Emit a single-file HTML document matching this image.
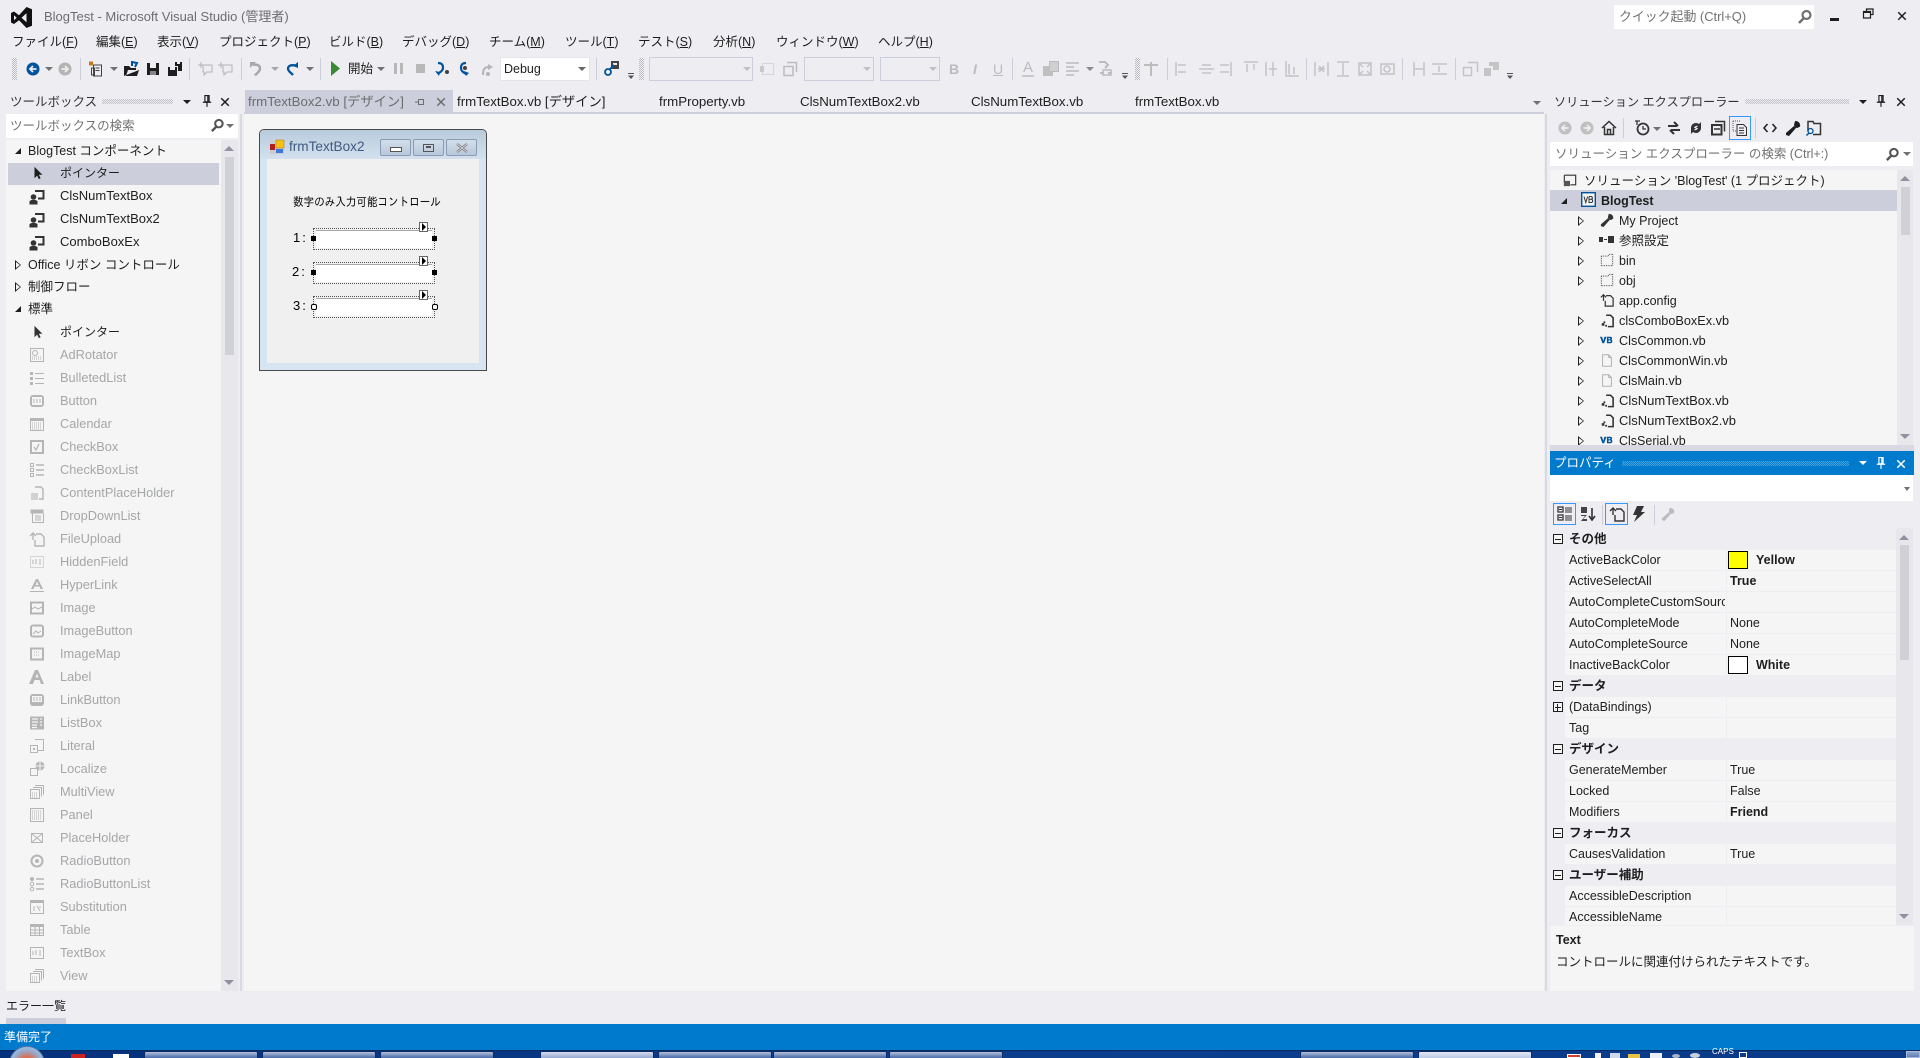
<!DOCTYPE html>
<html lang="ja"><head><meta charset="utf-8"><title>BlogTest - Microsoft Visual Studio</title>
<style>
html,body{margin:0;padding:0;width:1920px;height:1058px;overflow:hidden;background:#eeeef2}
body{position:relative;font:12.5px/20px "Liberation Sans","Noto Sans CJK JP",sans-serif;color:#1e1e1e}
.t{position:absolute;white-space:nowrap;line-height:20px}
.r{position:absolute}
svg{position:absolute;overflow:visible}
.d{color:#a5a6a8;font-size:12.8px}
.l{font-size:13px}
.tab{font-size:13.3px}
.b{font-weight:bold}
.gh{position:absolute;height:5px;background:repeating-conic-gradient(#c2c2c9 0 25%,transparent 0 50%) 0 0/2px 2px}
.gv{position:absolute;width:5px;height:22px;top:58px;background:repeating-conic-gradient(#bdbdc4 0 25%,transparent 0 50%) 0 0/2px 2px}
.sep{position:absolute;width:1px;background:#cccedb}
.tri{position:absolute;width:0;height:0;border-left:4px solid transparent;border-right:4px solid transparent;border-top:4px solid #717171}
.up{position:absolute;width:0;height:0;border-left:5px solid transparent;border-right:5px solid transparent;border-bottom:5px solid #8f90a0}
.dn{position:absolute;width:0;height:0;border-left:5px solid transparent;border-right:5px solid transparent;border-top:5px solid #8f90a0}
.ex{position:absolute;margin:-1px 0 0 -1px;width:0;height:0;border-top:5px solid transparent;border-bottom:5px solid transparent;border-left:6px solid #1e1e1e}
.ex:after{content:"";position:absolute;left:-5px;top:-3px;width:0;height:0;border-top:3px solid transparent;border-bottom:3px solid transparent;border-left:4px solid #f5f5f5}
.exo:after{border-left-color:#eeeef2}
.ec{position:absolute;width:0;height:0;border-left:6px solid transparent;border-bottom:6px solid #1e1e1e}
.row{position:absolute;height:20px;background:#f5f5f5}
.bx{position:absolute;width:8px;height:8px;border:1px solid #1e1e1e;background:#f5f5f5}
.bx:before{content:"";position:absolute;left:1px;right:1px;top:3.5px;height:1px;background:#1e1e1e}
.sw{position:absolute;width:18px;height:16px;border:1px solid #000}
.tb{position:absolute;top:1051px;height:8px;width:114px;background:linear-gradient(#b5c2dc,#5a78b0 70%,#3d5f9e);border:1px solid #0b2c66;border-bottom:0;box-sizing:border-box;border-radius:2px 2px 0 0}
.fb{position:absolute;top:139px;width:29px;height:15px;border:1px solid #8a9bb3;border-radius:2px;background:linear-gradient(#d3deea,#b8c8da)}
.dot{position:absolute;left:313px;width:120px;height:20px;border:1px dotted #555;box-sizing:content-box}
.tx{position:absolute;left:316px;width:116px;height:18px;background:#fff;border-top:1px solid #a8a8a8;box-sizing:border-box}
.hb{position:absolute;width:5px;height:5px;background:#000}
.hw{position:absolute;width:4px;height:4px;background:#fff;border:1px solid #000;border-radius:2px}
.st{position:absolute;left:419px;width:7px;height:8px;background:#fff;border:1px solid #666}
.st:after{content:"";position:absolute;left:2px;top:0;border-top:4px solid transparent;border-bottom:4px solid transparent;border-left:4px solid #000}
</style></head><body>
<svg width="0" height="0" style="position:absolute">
<defs>
<symbol id="back" viewBox="0 0 16 16"><circle cx="8" cy="8" r="6.5" fill="currentColor"/><path d="M11.5 8H6M8 5L5 8l3 3" fill="none" stroke="#eeeef2" stroke-width="1.8"/></symbol>
<symbol id="fwd" viewBox="0 0 16 16"><circle cx="8" cy="8" r="6.5" fill="currentColor"/><path d="M4.5 8H10M8 5l3 3-3 3" fill="none" stroke="#eeeef2" stroke-width="1.8"/></symbol>
<symbol id="a" viewBox="0 0 16 16"><rect x="1.5" y="1.5" width="13" height="13" fill="none" stroke="currentColor"/><circle cx="6" cy="6" r="2.5" fill="none" stroke="currentColor"/><path d="M3 12h10M3 10h10" stroke="currentColor" stroke-dasharray="1 1"/></symbol>
<symbol id="bl" viewBox="0 0 16 16"><path d="M1 2h3v3H1zM1 7h3v3H1zM1 12h3v3H1z" fill="currentColor"/><path d="M6 3.5h9M6 8.5h9M6 13.5h9" stroke="currentColor"/></symbol>
<symbol id="btn" viewBox="0 0 16 16"><rect x="1" y="2" width="14" height="12" rx="3" fill="currentColor"/><rect x="3" y="4" width="10" height="8" fill="#f5f5f5"/><path d="M5 6v4M8 6v4M11 6v4" stroke="currentColor"/></symbol>
<symbol id="cal" viewBox="0 0 16 16"><rect x="1.5" y="2.5" width="13" height="12" fill="none" stroke="currentColor"/><path d="M1 2h14v3H1z" fill="currentColor"/><path d="M3 7h10M3 9h10M3 11h10M3 13h10" stroke="currentColor" stroke-dasharray="1 1"/></symbol>
<symbol id="chk" viewBox="0 0 16 16"><rect x="1" y="1" width="14" height="14" fill="currentColor"/><rect x="3" y="3" width="10" height="10" fill="#f5f5f5"/><path d="M5 8l2 3 3-6" fill="none" stroke="currentColor" stroke-width="1.3"/></symbol>
<symbol id="cl" viewBox="0 0 16 16"><path d="M1.5 1.5h3v3h-3zM1.5 6.5h3v3h-3zM1.5 11.500h3v3h-3z" fill="none" stroke="currentColor"/><path d="M7 3h8M7 8h8M7 13h8" stroke="currentColor" stroke-width="1.6"/></symbol>
<symbol id="cph" viewBox="0 0 16 16"><path d="M6 2h6l2 2v10H10" fill="none" stroke="currentColor" stroke-width="1.4"/><rect x="2" y="8" width="7" height="7" fill="currentColor" opacity=".55"/></symbol>
<symbol id="ddl" viewBox="0 0 16 16"><rect x="1.500" y="1.500" width="13" height="4" fill="currentColor"/><path d="M3.500 5.500v9h11v-9" fill="none" stroke="currentColor"/><path d="M6 8h6M6 10h6M6 12h6" stroke="currentColor"/></symbol>
<symbol id="fu" viewBox="0 0 16 16"><path d="M7 3h5l3 3v9H6v-6" fill="none" stroke="currentColor" stroke-width="1.4"/><path d="M4 9V3M1 5l3-3 3 3" fill="none" stroke="currentColor" stroke-width="1.4"/></symbol>
<symbol id="hf" viewBox="0 0 16 16"><rect x="1.500" y="2.500" width="13" height="11" fill="none" stroke="currentColor" stroke-dasharray="1 1"/><path d="M4 6v4M7 5v5M11 5v6" stroke="currentColor"/></symbol>
<symbol id="hl" viewBox="0 0 16 16"><path d="M2 12L7 2h2l5 10h-2.500l-1-2.500h-5L4.500 12zM6.500 8h3L8 4.500z" fill="currentColor"/><path d="M1 14.500h14" stroke="currentColor"/></symbol>
<symbol id="img" viewBox="0 0 16 16"><rect x="1" y="1.500" width="14" height="13" fill="currentColor"/><rect x="3" y="3.500" width="10" height="9" fill="#f5f5f5"/><path d="M3 9l3-2 3 2 4-2" fill="none" stroke="currentColor"/></symbol>
<symbol id="ib" viewBox="0 0 16 16"><rect x="1" y="1.500" width="14" height="13" rx="3" fill="currentColor"/><rect x="3" y="3.500" width="10" height="9" fill="#f5f5f5"/><path d="M4 11l3-3 2 2 3-2" fill="none" stroke="currentColor"/></symbol>
<symbol id="im" viewBox="0 0 16 16"><rect x="1" y="1.500" width="14" height="13" fill="currentColor"/><rect x="3" y="3.500" width="10" height="9" fill="#f5f5f5"/><path d="M5 6h6M5 9h6" stroke="currentColor" stroke-dasharray="1 1"/></symbol>
<symbol id="lb" viewBox="0 0 16 16"><path d="M0 15L6 1h3l6 14h-3l-1.500-4h-5L4 15zM6.500 8.500h3L8 4.500z" fill="currentColor"/></symbol>
<symbol id="lk" viewBox="0 0 16 16"><rect x="1" y="2" width="14" height="12" rx="3" fill="currentColor"/><rect x="3" y="4" width="10" height="6" fill="#f5f5f5"/><path d="M5 5v4M8 5v4M11 5v4" stroke="currentColor"/></symbol>
<symbol id="lst" viewBox="0 0 16 16"><rect x="1" y="1.500" width="14" height="13" fill="currentColor"/><path d="M3 4h6M3 7h6M3 10h5M3 12.500h5M11 4h2M11 7h2M11 10h2" stroke="#f5f5f5" stroke-width="1.300"/></symbol>
<symbol id="lit" viewBox="0 0 16 16"><path d="M6 1.500h8.500v11H9" fill="none" stroke="currentColor"/><rect x="1.500" y="7.500" width="7" height="7" fill="#f5f5f5" stroke="currentColor"/><rect x="4" y="10" width="2" height="2" fill="currentColor"/></symbol>
<symbol id="loc" viewBox="0 0 16 16"><circle cx="11" cy="5" r="4.500" fill="currentColor"/><path d="M6.500 5h9M11 .5v9" stroke="#f5f5f5"/><rect x="1.500" y="7.500" width="7" height="7" fill="#f5f5f5" stroke="currentColor"/></symbol>
<symbol id="mv" viewBox="0 0 16 16"><path d="M6 1.500h8.500v9M4 3.500h8.500v9" fill="none" stroke="currentColor"/><rect x="1.500" y="5.500" width="9" height="9" fill="#f5f5f5" stroke="currentColor"/><path d="M3 9h6M3 11h6M3 13h6" stroke="currentColor" stroke-dasharray="1 1"/></symbol>
<symbol id="pn" viewBox="0 0 16 16"><rect x="1.500" y="1.500" width="13" height="13" fill="none" stroke="currentColor"/><path d="M3 4h10M3 6h10M3 8h10M3 10h10M3 12h10" stroke="currentColor" stroke-dasharray="1 1"/></symbol>
<symbol id="ph" viewBox="0 0 16 16"><rect x="2.500" y="3.500" width="11" height="9" fill="none" stroke="currentColor"/><path d="M2.500 3.500l11 9M13.500 3.500l-11 9" stroke="currentColor"/></symbol>
<symbol id="rb" viewBox="0 0 16 16"><circle cx="8" cy="8" r="5.500" fill="none" stroke="currentColor" stroke-width="2"/><circle cx="8" cy="8" r="2" fill="currentColor"/></symbol>
<symbol id="rl" viewBox="0 0 16 16"><circle cx="3" cy="3" r="2" fill="currentColor"/><circle cx="3" cy="8" r="1.800" fill="none" stroke="currentColor"/><circle cx="3" cy="13" r="1.800" fill="none" stroke="currentColor"/><path d="M7 3h8M7 8h8M7 13h8" stroke="currentColor" stroke-width="1.600"/></symbol>
<symbol id="sb" viewBox="0 0 16 16"><rect x="1.500" y="1.500" width="13" height="13" fill="none" stroke="currentColor"/><path d="M1 1h14v3H1z" fill="currentColor"/><path d="M5 7v5M8 7l3 5M11 7v2" stroke="currentColor"/></symbol>
<symbol id="tbl" viewBox="0 0 16 16"><rect x="1.500" y="2.500" width="13" height="11" fill="none" stroke="currentColor"/><path d="M1 2h14v3H1z" fill="currentColor"/><path d="M1 8h14M1 11h14M6 5v8M10.500 5v8" stroke="currentColor"/></symbol>
<symbol id="tx" viewBox="0 0 16 16"><rect x="1.500" y="2.500" width="13" height="11" fill="none" stroke="currentColor"/><path d="M4 6v4M7 5v5M11 5v6" stroke="currentColor"/></symbol>
<symbol id="ptr" viewBox="0 0 16 16"><path d="M4 1v13l3-3 2 4 2-1-2-4h4z" fill="currentColor"/></symbol>
<symbol id="cmp" viewBox="0 0 16 16"><path d="M6 2h8.500v7.500H9" fill="none" stroke="currentColor" stroke-width="2"/><circle cx="4.500" cy="8" r="2.800" fill="currentColor"/><path d="M.5 15.500V12l2-1h4l2 1v3.500z" fill="currentColor"/></symbol>
<symbol id="newp" viewBox="0 0 16 16"><path d="M5.500 4.500h8v11h-8zM3.500 7.500h3v7h-3z" fill="none" stroke="currentColor"/><path d="M1 1h4v4H1z" fill="#c27d1a"/><path d="M7.500 7.500h4M7.500 10h4" stroke="currentColor"/></symbol>
<symbol id="open" viewBox="0 0 16 16"><path d="M1 15V5h5l2 2h5v2H5l-2 6h11l2-6" fill="#1e1e1e"/><path d="M9 5V1l5 1-2 4" fill="none" stroke="#00539c" stroke-width="2"/></symbol>
<symbol id="save" viewBox="0 0 16 16"><path d="M2 2h12v12H2z" fill="currentColor"/><path d="M5 2h6v5H5z" fill="#eeeef2"/><path d="M5 10h6v4H5z" fill="#eeeef2" opacity=".5"/></symbol>
<symbol id="saveall" viewBox="0 0 16 16"><path d="M1 6h9v9H1z" fill="currentColor"/><path d="M3 6h5v3H3z" fill="#eeeef2"/><path d="M8 1h7v9h-4V5H8z" fill="currentColor"/><path d="M10 1h3v2h-3z" fill="#eeeef2"/></symbol>
<symbol id="cm" viewBox="0 0 16 16"><path d="M5 4h9v7H9l-3 3v-3H5z" fill="none" stroke="currentColor"/><path d="M3 1v6M0 4h6" stroke="currentColor"/></symbol>
<symbol id="undo" viewBox="0 0 16 16"><path d="M2 1h6L2 7z" fill="currentColor"/><path d="M5 4c4-1 7 .5 7 3.500 0 3-3 4.500-5 7" fill="none" stroke="currentColor" stroke-width="2.500"/></symbol>
<symbol id="redo" viewBox="0 0 16 16"><path d="M14 7V1l-5 4z" fill="currentColor"/><path d="M11 4.500c-4-1-7 .5-7 3 0 3 3 4 5 6.500" fill="none" stroke="currentColor" stroke-width="2.300"/></symbol>
<symbol id="si" viewBox="0 0 16 16"><path d="M4 2c4 0 5 2 5 5 0 3-3 4-5 6" fill="none" stroke="#00539c" stroke-width="2.200"/><path d="M1 10l5 1-1 4z" fill="#00539c"/><circle cx="13" cy="11" r="2" fill="#424242"/></symbol>
<symbol id="so" viewBox="0 0 16 16"><path d="M10 2C6 2 5 4 5 7s2 4 5 6" fill="none" stroke="#00539c" stroke-width="2.200"/><path d="M8 10l5 2-3 3z" fill="#00539c"/><circle cx="9" cy="7" r="2" fill="#424242"/></symbol>
<symbol id="sou" viewBox="0 0 16 16"><path d="M4 14c0-5 1-8 6-8" fill="none" stroke="currentColor" stroke-width="2"/><path d="M9 3l5 3-5 3z" fill="currentColor"/><circle cx="9" cy="13" r="2" fill="currentColor"/></symbol>
<symbol id="wr" viewBox="0 0 16 16"><path d="M10 1a4.500 4.500 0 0 1 5 5.500L12.500 8 10 7.500 9 5zM1 13l8-7 2 2-7 8-3-1z" fill="currentColor"/></symbol>
<symbol id="tbo" viewBox="0 0 16 16"><path d="M7 1h8v8H7z" fill="#424242"/><path d="M9 3h4v2H9z" fill="#eeeef2"/><circle cx="4" cy="12" r="3" fill="none" stroke="#00539c" stroke-width="1.800"/><path d="M6 9l4-4" stroke="#00539c" stroke-width="1.800"/></symbol>
<symbol id="srch" viewBox="0 0 16 16"><circle cx="9.500" cy="6" r="4" fill="none" stroke="currentColor" stroke-width="2.200"/><path d="M7 9l-5 5" stroke="currentColor" stroke-width="2.600"/></symbol>
<symbol id="pin" viewBox="0 0 12 16"><path d="M3.500 1.500h5V9h-5zM1 9.500h10M6 10v5M7 2v7" fill="none" stroke="currentColor" stroke-width="1.400"/></symbol>
<symbol id="x" viewBox="0 0 12 12"><path d="M1.500 1.500l9 9M10.500 1.500l-9 9" stroke="currentColor" stroke-width="1.800"/></symbol>
<symbol id="tdoc" viewBox="0 0 16 16"><path d="M3 1.500h7l3 3v10H3z" fill="none" stroke="currentColor"/><path d="M10 1.500v3h3" fill="none" stroke="currentColor"/></symbol>
<symbol id="frm" viewBox="0 0 16 16"><path d="M7 2h5l3 3v10H9" fill="none" stroke="currentColor" stroke-width="1.800"/><path d="M2 11h3v3H2zM6 13h2v2H6zM4 9h2v2H4z" fill="currentColor"/></symbol>
<symbol id="vb" viewBox="0 0 16 16"><path d="M0 4h2.500l1.500 5 1.500-5H8l-3 8H3zM8.500 4H13c2 0 2.500 3 1 3.500 2 .5 1.500 4.500-1 4.500H8.500zM10.500 5.500v1.500h2v-1.500zM10.500 8.500v2h2.500v-2z" fill="#00539c"/></symbol>
<symbol id="dots" viewBox="0 0 16 16"><path d="M1.500 3.500h8l1-2h4v13h-13z" fill="none" stroke="#333" stroke-dasharray="1 1"/></symbol>
</defs>
</svg>

<!-- title bar -->
<svg style="left:11px;top:7px" width="21" height="21" viewBox="0 0 21 21"><path d="M0 6l3-1.500 5 3.700L15.500 0 21 2.300v16.400L15.500 21 8 13.300l-5 3.700L0 15.500zM3 8.300v5l2.700-2.500zM15.500 6.300l-5 4.500 5 4.500z" fill="#111" fill-rule="evenodd"/></svg>
<div class="t" style="left:44px;top:7px;color:#6d6d70;font-size:13px">BlogTest - Microsoft Visual Studio (管理者)</div>
<div class="r" style="left:1614px;top:5px;width:200px;height:24px;background:#fff"></div>
<div class="t" style="left:1619px;top:7px;color:#717171;font-size:12.9px">クイック起動 (Ctrl+Q)</div>
<svg style="left:1797px;top:9px;color:#717171" width="16" height="16"><use href="#srch"/></svg>
<div class="r" style="left:1830px;top:18px;width:9px;height:3px;background:#1e1e1e"></div>
<svg style="left:1863px;top:8px" width="11" height="11" viewBox="0 0 11 11"><path d="M3.500 3V1H10v5.500H8M.5 3.500H7.500V10H.5z" fill="none" stroke="#1e1e1e" stroke-width="1.200"/><path d="M.5 4h7" stroke="#1e1e1e" stroke-width="2"/></svg>
<svg style="left:1897px;top:11px;color:#1e1e1e" width="10" height="10"><use href="#x"/></svg>

<!-- menu -->
<div class="t" style="left:12px;top:32px">ファイル(<u>F</u>)</div>
<div class="t" style="left:96px;top:32px">編集(<u>E</u>)</div>
<div class="t" style="left:157px;top:32px">表示(<u>V</u>)</div>
<div class="t" style="left:219px;top:32px">プロジェクト(<u>P</u>)</div>
<div class="t" style="left:329px;top:32px">ビルド(<u>B</u>)</div>
<div class="t" style="left:402px;top:32px">デバッグ(<u>D</u>)</div>
<div class="t" style="left:489px;top:32px">チーム(<u>M</u>)</div>
<div class="t" style="left:565px;top:32px">ツール(<u>T</u>)</div>
<div class="t" style="left:638px;top:32px">テスト(<u>S</u>)</div>
<div class="t" style="left:713px;top:32px">分析(<u>N</u>)</div>
<div class="t" style="left:776px;top:32px">ウィンドウ(<u>W</u>)</div>
<div class="t" style="left:878px;top:32px">ヘルプ(<u>H</u>)</div>

<!-- toolbar -->
<div class="gv" style="left:12px"></div>
<svg style="left:25px;top:61px;color:#00539c" width="16" height="16"><use href="#back"/></svg>
<div class="tri" style="left:45px;top:67px"></div>
<svg style="left:57px;top:61px;color:#b4b4b4" width="16" height="16"><use href="#fwd"/></svg>
<div class="sep" style="left:80px;top:58px;height:22px"></div>
<svg style="left:88px;top:60px;color:#424242" width="16" height="17"><use href="#newp"/></svg>
<div class="tri" style="left:110px;top:67px"></div>
<svg style="left:123px;top:61px" width="16" height="16"><use href="#open"/></svg>
<svg style="left:145px;top:61px;color:#1e1e1e" width="16" height="16"><use href="#save"/></svg>
<svg style="left:167px;top:61px;color:#1e1e1e" width="16" height="16"><use href="#saveall"/></svg>
<div class="sep" style="left:189px;top:58px;height:22px"></div>
<svg style="left:198px;top:61px;color:#b4b4b4" width="16" height="16"><use href="#cm"/></svg>
<svg style="left:218px;top:61px;color:#b4b4b4" width="16" height="16"><use href="#cm"/></svg>
<div class="sep" style="left:241px;top:58px;height:22px"></div>
<svg style="left:248px;top:61px;color:#a8a8a8" width="16" height="16"><use href="#undo"/></svg>
<div class="tri" style="left:271px;top:67px;border-top-color:#a8a8a8"></div>
<svg style="left:284px;top:61px;color:#00539c" width="16" height="16"><use href="#redo"/></svg>
<div class="tri" style="left:306px;top:67px"></div>
<div class="sep" style="left:320px;top:58px;height:22px"></div>
<svg style="left:331px;top:61px" width="10" height="15" viewBox="0 0 10 15"><path d="M0 0l9 7.500L0 15z" fill="#388a34"/></svg>
<div class="t" style="left:348px;top:59px">開始</div>
<div class="tri" style="left:377px;top:67px"></div>
<div class="r" style="left:394px;top:63px;width:3px;height:11px;background:#b8b8b8"></div><div class="r" style="left:400px;top:63px;width:3px;height:11px;background:#b8b8b8"></div>
<div class="r" style="left:416px;top:64px;width:9px;height:9px;background:#b8b8b8"></div>
<svg style="left:434px;top:61px" width="16" height="16"><use href="#si"/></svg>
<svg style="left:456px;top:61px" width="16" height="16"><use href="#so"/></svg>
<svg style="left:479px;top:61px;color:#b4b4b4" width="16" height="16"><use href="#sou"/></svg>
<div class="r" style="left:500px;top:57px;width:90px;height:24px;background:#fff;border:1px solid #e4e4ea;box-sizing:border-box"></div>
<div class="t" style="left:504px;top:59px">Debug</div>
<div class="tri" style="left:578px;top:67px;border-top-color:#666"></div>
<div class="sep" style="left:596px;top:58px;height:22px"></div>
<svg style="left:604px;top:60px" width="16" height="16"><use href="#tbo"/></svg>
<svg style="left:627px;top:73px" width="8" height="6" viewBox="0 0 8 6"><path d="M1 .5h6" stroke="#555"/><path d="M1 2.500h6L4 6z" fill="#555"/></svg>
<div class="gv" style="left:639px"></div>
<div class="r" style="left:649px;top:57px;width:104px;height:24px;border:1px solid #cccedb;box-sizing:border-box"></div><div class="tri" style="left:743px;top:67px;border-top-color:#c0c0c0"></div>
<svg style="left:760px;top:61px" width="16" height="16" viewBox="0 0 16 16"><path d="M2.500 2.500h11v11h-11z" fill="none" stroke="#bcbcbc" stroke-dasharray="1 1"/><path d="M0 5h4v6H0z" fill="#c8c8c8"/></svg>
<svg style="left:782px;top:61px" width="16" height="16" viewBox="0 0 16 16"><path d="M5 1.500h9.500V11M2 5.500h9v9H2z" fill="none" stroke="#bcbcbc" stroke-width="1.500"/></svg>
<div class="r" style="left:804px;top:57px;width:70px;height:24px;border:1px solid #cccedb;box-sizing:border-box"></div><div class="tri" style="left:863px;top:67px;border-top-color:#c0c0c0"></div>
<div class="r" style="left:880px;top:57px;width:60px;height:24px;border:1px solid #cccedb;box-sizing:border-box"></div><div class="tri" style="left:929px;top:67px;border-top-color:#c0c0c0"></div>
<div class="t b" style="left:949px;top:59px;color:#bcbcbc;font-size:14px;font-family:'Liberation Sans'">B</div>
<div class="t" style="left:973px;top:59px;color:#bcbcbc;font-size:14px;font-style:italic;font-weight:bold">I</div>
<div class="t" style="left:993px;top:59px;color:#bcbcbc;font-size:14px;text-decoration:underline">U</div>
<div class="sep" style="left:1012px;top:58px;height:22px"></div>
<div class="t" style="left:1023px;top:58px;color:#bcbcbc;font-size:15px">A</div><div class="r" style="left:1022px;top:75px;width:12px;height:2px;background:#c8c8c8"></div>
<div class="r" style="left:1043px;top:66px;width:10px;height:10px;background:#c0c0c0"></div><div class="r" style="left:1049px;top:61px;width:8px;height:9px;background:#d0d0d0;border:1px solid #bcbcbc"></div>
<svg style="left:1066px;top:61px" width="14" height="16" viewBox="0 0 14 16"><path d="M0 2h13M0 6h8M0 10h13M0 14h8" stroke="#bcbcbc" stroke-width="1.500"/></svg>
<div class="tri" style="left:1086px;top:67px;border-top-color:#8a8a8a"></div>
<svg style="left:1099px;top:60px" width="15" height="17" viewBox="0 0 15 17"><path d="M0 2h6l3 3-3 3M1 13h4M9 13h4" fill="none" stroke="#bcbcbc" stroke-width="2"/><rect x="4" y="10" width="8" height="5" fill="none" stroke="#bcbcbc" stroke-width="1.500"/></svg>
<svg style="left:1121px;top:73px" width="8" height="6" viewBox="0 0 8 6"><path d="M1 .5h6" stroke="#555"/><path d="M1 2.500h6L4 6z" fill="#555"/></svg>
<div class="gv" style="left:1135px"></div>
<svg style="left:1144px;top:62px" width="14" height="14" viewBox="0 0 14 14"><path d="M0 3h14M7 0v14" stroke="#bcbcbc" stroke-width="2"/></svg>
<div class="sep" style="left:1167px;top:58px;height:22px"></div>
<svg style="left:1175px;top:61px" width="116" height="16" viewBox="0 0 116 16" fill="none" stroke="#c4c4c4" stroke-width="1.500">
<path d="M1 1v14M3 4h8M3 11h8M24 8h15M27 4h9M27 12h9M56 1v14M45 4h9M45 11h9M69 1h14M72 3v8M79 3v6M91 1v14M98 1v14M94 8h8"/><path d="M111 0v14M114 14H115"/></svg>
<svg style="left:1284px;top:61px" width="16" height="16" viewBox="0 0 16 16" fill="none" stroke="#c4c4c4" stroke-width="1.500"><path d="M1 15h14M5 3v10M10 6v7"/></svg>
<div class="sep" style="left:1306px;top:58px;height:22px"></div>
<svg style="left:1314px;top:61px" width="84" height="16" viewBox="0 0 84 16" fill="none" stroke="#c4c4c4" stroke-width="1.500"><path d="M1 1v14M14 1v14M4 8h7M5 5l5 6M10 5l-5 6M23 1h12M23 15h12M29 2v12M45 2h12v12H45zM45 2l4 4M57 2l-4 4M45 14l4-4M57 14l-4-4M67 3h13v10H67zM70 8a3 3 0 1 0 6 0a3 3 0 1 0-6 0"/></svg>
<div class="sep" style="left:1402px;top:58px;height:22px"></div>
<svg style="left:1411px;top:61px" width="38" height="16" viewBox="0 0 38 16" fill="none" stroke="#c4c4c4" stroke-width="1.500"><path d="M3 1v14M13 1v14M4 8h8M21 3h15M21 13h15M28 5v6"/></svg>
<div class="sep" style="left:1455px;top:58px;height:22px"></div>
<svg style="left:1462px;top:61px" width="38" height="16" viewBox="0 0 38 16"><path d="M6 1.500h9.500V11M1.500 6.500h8v8h-8z" fill="none" stroke="#c4c4c4" stroke-width="1.500"/><path d="M27 1h10v8h-6V5h-4zM22 7h7v8h-7z" fill="#c4c4c4"/></svg>
<svg style="left:1506px;top:73px" width="8" height="6" viewBox="0 0 8 6"><path d="M1 .5h6" stroke="#555"/><path d="M1 2.500h6L4 6z" fill="#555"/></svg>

<!-- document area -->
<div class="r" style="left:245px;top:90px;width:208px;height:24px;background:#cccedb"></div>
<div class="r" style="left:244px;top:112px;width:1300px;height:2px;background:#cccedb"></div>
<div class="r" style="left:244px;top:114px;width:1300px;height:877px;background:#f5f5f5"></div>
<div class="t tab" style="left:248px;top:92px;color:#6d6d70">frmTextBox2.vb [デザイン]</div>
<svg style="left:415px;top:97px" width="11" height="10" viewBox="0 0 11 10"><path d="M0 5h3M3.500 2.500v5h5v-5z" fill="none" stroke="#6d6d70"/></svg>
<svg style="left:436px;top:97px;color:#6d6d70" width="10" height="10"><use href="#x"/></svg>
<div class="t tab" style="left:457px;top:92px">frmTextBox.vb [デザイン]</div>
<div class="t tab" style="left:659px;top:92px">frmProperty.vb</div>
<div class="t tab" style="left:800px;top:92px">ClsNumTextBox2.vb</div>
<div class="t tab" style="left:971px;top:92px">ClsNumTextBox.vb</div>
<div class="t tab" style="left:1135px;top:92px">frmTextBox.vb</div>
<div class="tri" style="left:1533px;top:101px"></div>

<!-- designer form -->
<div class="r" style="left:259px;top:129px;width:228px;height:242px;background:#d7e4f1;border:1px solid #4a4a4a;border-radius:5px 5px 0 0;box-sizing:border-box"></div>
<div class="r" style="left:260px;top:130px;width:226px;height:29px;background:linear-gradient(#b9cbdc,#d3e1ee);border-radius:4px 4px 0 0"></div>
<div class="r" style="left:267px;top:159px;width:212px;height:204px;background:#f0f0f0"></div>
<svg style="left:270px;top:140px" width="14" height="14" viewBox="0 0 14 14"><rect width="14" height="14" fill="#c9ccd1"/><rect x="6" y="0" width="8" height="8" fill="#f3c11a" stroke="#b98a10" stroke-width=".6"/><rect x="0" y="4" width="5" height="6" fill="#b02020"/><rect x="6" y="9" width="7" height="4" fill="#3f78d8"/></svg>
<div class="t" style="left:289px;top:137px;color:#3e5a7f;font-size:13.6px">frmTextBox2</div>
<div class="fb" style="left:380px"></div><div class="r" style="left:390px;top:147px;width:10px;height:3px;background:#fff;border:1px solid #555"></div>
<div class="fb" style="left:413px"></div><div class="r" style="left:423px;top:144px;width:9px;height:6px;border:1px solid #555"></div><div class="r" style="left:426px;top:146px;width:5px;height:2px;background:#555"></div>
<div class="fb" style="left:446px"></div><svg style="left:456px;top:143px" width="12" height="10" viewBox="0 0 12 10"><path d="M1 1l10 8M11 1L1 9" stroke="#777" stroke-width="2.400"/><path d="M1 1l10 8M11 1L1 9" stroke="#e8eef4" stroke-width=".8"/></svg>
<div class="t" style="left:293px;top:192px;font-size:12px;transform:scaleX(.88);transform-origin:left;font-family:'IPAGothic','Noto Sans CJK JP',sans-serif;color:#000">数字のみ入力可能コントロール</div>
<div class="t" style="left:293px;top:228px;font-size:13px;letter-spacing:2px;color:#000">1:</div>
<div class="t" style="left:292px;top:262px;font-size:13px;letter-spacing:2px;color:#000">2:</div>
<div class="t" style="left:293px;top:296px;font-size:13px;letter-spacing:2px;color:#000">3:</div>
<div class="dot" style="top:228px"></div><div class="tx" style="top:230px"></div>
<div class="hb" style="left:311px;top:236px"></div><div class="hb" style="left:432px;top:236px"></div><div class="st" style="top:222px"></div>
<div class="dot" style="top:262px"></div><div class="tx" style="top:264px"></div>
<div class="hb" style="left:311px;top:270px"></div><div class="hb" style="left:432px;top:270px"></div><div class="st" style="top:256px"></div>
<div class="dot" style="top:296px"></div><div class="tx" style="top:298px"></div>
<div class="hw" style="left:311px;top:304px"></div><div class="hw" style="left:432px;top:304px"></div><div class="st" style="top:290px"></div>

<!-- toolbox -->
<div class="t" style="left:10px;top:92px;color:#333">ツールボックス</div>
<div class="gh" style="left:102px;top:99px;width:71px"></div>
<div class="tri" style="left:183px;top:100px;border-top-color:#1e1e1e"></div>
<svg style="left:202px;top:94px;color:#1e1e1e" width="10" height="14"><use href="#pin"/></svg>
<svg style="left:220px;top:97px;color:#1e1e1e" width="10" height="10"><use href="#x"/></svg>
<div class="r" style="left:6px;top:114px;width:232px;height:24px;background:#fff"></div>
<div class="t" style="left:10px;top:116px;color:#717171">ツールボックスの検索</div>
<svg style="left:210px;top:118px;color:#555" width="15" height="15"><use href="#srch"/></svg>
<div class="tri" style="left:226px;top:124px"></div>
<div class="r" style="left:6px;top:140px;width:215px;height:851px;background:#f5f5f5"></div>
<div class="r" style="left:221px;top:140px;width:17px;height:851px;background:#e8e8ec"></div>
<div class="r" style="left:225px;top:157px;width:9px;height:198px;background:#d0d1d7"></div>
<div class="up" style="left:224px;top:146px"></div>
<div class="dn" style="left:224px;top:980px"></div>
<div class="r" style="left:240px;top:114px;width:2px;height:877px;background:#d8d9e2"></div>
<div class="r" style="left:8px;top:163px;width:211px;height:22px;background:#cccedb"></div>

<div class="ec" style="left:15px;top:148px"></div><div class="t" style="left:28px;top:141px">BlogTest コンポーネント</div>
<svg style="left:31px;top:165px;color:#1e1e1e" width="14" height="16"><use href="#ptr"/></svg><div class="t" style="left:60px;top:163px;font-size:12px">ポインター</div>
<svg style="left:29px;top:189px;color:#333" width="16" height="16"><use href="#cmp"/></svg><div class="t l" style="left:60px;top:186px">ClsNumTextBox</div>
<svg style="left:29px;top:212px;color:#333" width="16" height="16"><use href="#cmp"/></svg><div class="t l" style="left:60px;top:209px">ClsNumTextBox2</div>
<svg style="left:29px;top:235px;color:#333" width="16" height="16"><use href="#cmp"/></svg><div class="t l" style="left:60px;top:232px">ComboBoxEx</div>
<div class="ex" style="left:16px;top:261px"></div><div class="t" style="left:28px;top:255px">Office リボン コントロール</div>
<div class="ex" style="left:16px;top:283px"></div><div class="t" style="left:28px;top:277px">制御フロー</div>
<div class="ec" style="left:15px;top:306px"></div><div class="t" style="left:28px;top:299px">標準</div>
<svg style="left:31px;top:324px;color:#333" width="14" height="16"><use href="#ptr"/></svg><div class="t" style="left:60px;top:322px;font-size:12px">ポインター</div>
<div style="color:#b5b5b5">
<svg style="left:29px;top:347px" width="16" height="16"><use href="#a"/></svg>
<svg style="left:29px;top:370px" width="16" height="16"><use href="#bl"/></svg>
<svg style="left:29px;top:393px" width="16" height="16"><use href="#btn"/></svg>
<svg style="left:29px;top:416px" width="16" height="16"><use href="#cal"/></svg>
<svg style="left:29px;top:439px" width="16" height="16"><use href="#chk"/></svg>
<svg style="left:29px;top:462px" width="16" height="16"><use href="#cl"/></svg>
<svg style="left:29px;top:485px" width="16" height="16"><use href="#cph"/></svg>
<svg style="left:29px;top:508px" width="16" height="16"><use href="#ddl"/></svg>
<svg style="left:29px;top:531px" width="16" height="16"><use href="#fu"/></svg>
<svg style="left:29px;top:554px" width="16" height="16"><use href="#hf"/></svg>
<svg style="left:29px;top:577px" width="16" height="16"><use href="#hl"/></svg>
<svg style="left:29px;top:600px" width="16" height="16"><use href="#img"/></svg>
<svg style="left:29px;top:623px" width="16" height="16"><use href="#ib"/></svg>
<svg style="left:29px;top:646px" width="16" height="16"><use href="#im"/></svg>
<svg style="left:29px;top:669px" width="16" height="16"><use href="#lb"/></svg>
<svg style="left:29px;top:692px" width="16" height="16"><use href="#lk"/></svg>
<svg style="left:29px;top:715px" width="16" height="16"><use href="#lst"/></svg>
<svg style="left:29px;top:738px" width="16" height="16"><use href="#lit"/></svg>
<svg style="left:29px;top:761px" width="16" height="16"><use href="#loc"/></svg>
<svg style="left:29px;top:784px" width="16" height="16"><use href="#mv"/></svg>
<svg style="left:29px;top:807px" width="16" height="16"><use href="#pn"/></svg>
<svg style="left:29px;top:830px" width="16" height="16"><use href="#ph"/></svg>
<svg style="left:29px;top:853px" width="16" height="16"><use href="#rb"/></svg>
<svg style="left:29px;top:876px" width="16" height="16"><use href="#rl"/></svg>
<svg style="left:29px;top:899px" width="16" height="16"><use href="#sb"/></svg>
<svg style="left:29px;top:922px" width="16" height="16"><use href="#tbl"/></svg>
<svg style="left:29px;top:945px" width="16" height="16"><use href="#tx"/></svg>
<svg style="left:29px;top:968px" width="16" height="16"><use href="#mv"/></svg>
</div>
<div class="t d" style="left:60px;top:345px">AdRotator</div>
<div class="t d" style="left:60px;top:368px">BulletedList</div>
<div class="t d" style="left:60px;top:391px">Button</div>
<div class="t d" style="left:60px;top:414px">Calendar</div>
<div class="t d" style="left:60px;top:437px">CheckBox</div>
<div class="t d" style="left:60px;top:460px">CheckBoxList</div>
<div class="t d" style="left:60px;top:483px">ContentPlaceHolder</div>
<div class="t d" style="left:60px;top:506px">DropDownList</div>
<div class="t d" style="left:60px;top:529px">FileUpload</div>
<div class="t d" style="left:60px;top:552px">HiddenField</div>
<div class="t d" style="left:60px;top:575px">HyperLink</div>
<div class="t d" style="left:60px;top:598px">Image</div>
<div class="t d" style="left:60px;top:621px">ImageButton</div>
<div class="t d" style="left:60px;top:644px">ImageMap</div>
<div class="t d" style="left:60px;top:667px">Label</div>
<div class="t d" style="left:60px;top:690px">LinkButton</div>
<div class="t d" style="left:60px;top:713px">ListBox</div>
<div class="t d" style="left:60px;top:736px">Literal</div>
<div class="t d" style="left:60px;top:759px">Localize</div>
<div class="t d" style="left:60px;top:782px">MultiView</div>
<div class="t d" style="left:60px;top:805px">Panel</div>
<div class="t d" style="left:60px;top:828px">PlaceHolder</div>
<div class="t d" style="left:60px;top:851px">RadioButton</div>
<div class="t d" style="left:60px;top:874px">RadioButtonList</div>
<div class="t d" style="left:60px;top:897px">Substitution</div>
<div class="t d" style="left:60px;top:920px">Table</div>
<div class="t d" style="left:60px;top:943px">TextBox</div>
<div class="t d" style="left:60px;top:966px">View</div>

<!-- solution explorer -->
<div class="r" style="left:1545px;top:114px;width:2px;height:877px;background:#d8d9e2"></div>
<div class="t" style="left:1554px;top:92px;color:#333;font-size:12.2px">ソリューション エクスプローラー</div>
<div class="gh" style="left:1745px;top:99px;width:104px"></div>
<div class="tri" style="left:1859px;top:100px;border-top-color:#1e1e1e"></div>
<svg style="left:1876px;top:94px;color:#1e1e1e" width="10" height="14"><use href="#pin"/></svg>
<svg style="left:1896px;top:97px;color:#1e1e1e" width="10" height="10"><use href="#x"/></svg>
<svg style="left:1557px;top:120px;color:#c0c0c0" width="16" height="16"><use href="#back"/></svg>
<svg style="left:1579px;top:120px;color:#c0c0c0" width="16" height="16"><use href="#fwd"/></svg>
<svg style="left:1601px;top:120px" width="16" height="16" viewBox="0 0 16 16"><path d="M1 8l7-6.500L15 8M3.500 7v7.500h9V7M6.500 14.500v-5h3v5" fill="none" stroke="#333" stroke-width="1.500"/></svg>
<div class="sep" style="left:1623px;top:118px;height:20px"></div>
<svg style="left:1634px;top:120px" width="16" height="16" viewBox="0 0 16 16"><circle cx="9" cy="9" r="5.500" fill="none" stroke="#333" stroke-width="1.800"/><path d="M9 6v3h3M1 1h5M3 1v4" fill="none" stroke="#333" stroke-width="1.300"/></svg>
<div class="tri" style="left:1653px;top:127px"></div>
<svg style="left:1666px;top:120px" width="16" height="16" viewBox="0 0 16 16"><path d="M2 6h9M8 2l4 4M14 10H5M8 14l-4-4" fill="none" stroke="#333" stroke-width="2"/></svg>
<svg style="left:1688px;top:120px" width="16" height="16" viewBox="0 0 16 16"><path d="M3 8a5 5 0 0 1 8-4l2-2v6H8l2-2a3 3 0 0 0-4 2zM13 8a5 5 0 0 1-8 4l-2 2V8h5l-2 2a3 3 0 0 0 4-2z" fill="#333"/></svg>
<svg style="left:1710px;top:120px" width="16" height="16" viewBox="0 0 16 16"><path d="M5 1.500h9.500v10" fill="none" stroke="#333" stroke-width="1.500"/><rect x="2" y="5" width="9.500" height="9.500" fill="none" stroke="#333" stroke-width="2"/><path d="M4 9h6" stroke="#333" stroke-width="1.500"/></svg>
<div class="r" style="left:1729px;top:116px;width:22px;height:24px;border:1px solid #3399ff;box-sizing:border-box"></div>
<svg style="left:1732px;top:120px" width="16" height="16" viewBox="0 0 16 16"><path d="M1 1h8M1 1v10M1 11h3" fill="none" stroke="#555" stroke-dasharray="1 1"/><path d="M5 4.500h6.500l3 3v8H5z" fill="none" stroke="#333"/><path d="M7 8h5M7 10.500h5M7 13h5" stroke="#333"/></svg>
<div class="sep" style="left:1755px;top:118px;height:20px"></div>
<svg style="left:1763px;top:122px" width="14" height="12" viewBox="0 0 14 12"><path d="M4.500 2L1 6l3.500 4M9.500 2L13 6l-3.500 4" fill="none" stroke="#1e1e1e" stroke-width="1.500"/></svg>
<svg style="left:1785px;top:120px;color:#1e1e1e" width="16" height="16"><use href="#wr"/></svg>
<svg style="left:1806px;top:120px" width="16" height="16" viewBox="0 0 16 16"><path d="M2 11V1.500h5l1 2h6.500v11H7" fill="none" stroke="#333" stroke-width="1.500"/><circle cx="4.500" cy="11" r="2.500" fill="none" stroke="#00539c" stroke-width="1.300"/><path d="M3 13l-2.500 2.500" stroke="#00539c" stroke-width="1.500"/></svg>
<div class="r" style="left:1550px;top:142px;width:363px;height:24px;background:#fff"></div>
<div class="t" style="left:1555px;top:144px;color:#717171">ソリューション エクスプローラー の検索 (Ctrl+:)</div>
<svg style="left:1885px;top:147px;color:#555" width="15" height="15"><use href="#srch"/></svg>
<div class="tri" style="left:1903px;top:152px"></div>
<div class="r" style="left:1550px;top:170px;width:347px;height:275px;background:#f5f5f5"></div>
<div class="r" style="left:1897px;top:170px;width:16px;height:275px;background:#e8e8ec"></div>
<div class="r" style="left:1901px;top:187px;width:9px;height:48px;background:#d0d1d7"></div>
<div class="up" style="left:1900px;top:176px"></div><div class="dn" style="left:1900px;top:434px"></div>
<div class="r" style="left:1550px;top:190px;width:347px;height:21px;background:#cccedb"></div>
<svg style="left:1563px;top:172px" width="14" height="16" viewBox="0 0 16 16"><path d="M1.500 2.500h13v11h-6" fill="none" stroke="#333" stroke-width="1.300"/><path d="M1.500 2.500v8" stroke="#333" stroke-width="1.300"/><rect x="1" y="9" width="7" height="6" fill="#555"/></svg>
<div class="t" style="left:1584px;top:171px">ソリューション 'BlogTest' (1 プロジェクト)</div>
<div class="ec" style="left:1561px;top:198px"></div>
<svg style="left:1581px;top:192px" width="15" height="15" viewBox="0 0 15 15"><rect x=".7" y=".7" width="13.600" height="13.600" fill="#f5f5f5" stroke="#00539c" stroke-width="1.400"/><path d="M3 4.500l1.800 6 1.800-6M8 4.500v6h2c2.200 0 2.200-3.200 0-3.200H8M8 7.300h2c1.800 0 1.800-2.800 0-2.800H8" fill="none" stroke="#333"/></svg>
<div class="t b" style="left:1601px;top:191px">BlogTest</div>
<div class="ex" style="left:1579px;top:217px"></div><svg style="left:1600px;top:213px;color:#333" width="14" height="14"><use href="#wr"/></svg><div class="t" style="left:1619px;top:211px">My Project</div>
<div class="ex" style="left:1579px;top:237px"></div><svg style="left:1598px;top:233px" width="16" height="14" viewBox="0 0 16 14"><path d="M1 4h4v5H1zM10 3h6v7h-6z" fill="#333"/><path d="M6 6.500h3" stroke="#333"/></svg><div class="t" style="left:1619px;top:231px">参照設定</div>
<div class="ex" style="left:1579px;top:257px"></div><svg style="left:1600px;top:253px" width="14" height="14"><use href="#dots"/></svg><div class="t" style="left:1619px;top:251px">bin</div>
<div class="ex" style="left:1579px;top:277px"></div><svg style="left:1600px;top:273px" width="14" height="14"><use href="#dots"/></svg><div class="t" style="left:1619px;top:271px">obj</div>
<svg style="left:1600px;top:293px;color:#333" width="14" height="14"><use href="#fu"/></svg><div class="t" style="left:1619px;top:291px">app.config</div>
<div class="ex" style="left:1579px;top:317px"></div><svg style="left:1600px;top:313px;color:#333" width="14" height="15"><use href="#frm"/></svg><div class="t" style="left:1619px;top:311px;font-size:12.7px">clsComboBoxEx.vb</div>
<div class="ex" style="left:1579px;top:337px"></div><svg style="left:1600px;top:333px" width="13" height="14"><use href="#vb"/></svg><div class="t" style="left:1619px;top:331px;font-size:12.7px">ClsCommon.vb</div>
<div class="ex" style="left:1579px;top:357px"></div><svg style="left:1600px;top:353px;color:#a8a8a8" width="14" height="15"><use href="#tdoc"/></svg><div class="t" style="left:1619px;top:351px;font-size:12.7px">ClsCommonWin.vb</div>
<div class="ex" style="left:1579px;top:377px"></div><svg style="left:1600px;top:373px;color:#a8a8a8" width="14" height="15"><use href="#tdoc"/></svg><div class="t" style="left:1619px;top:371px;font-size:12.7px">ClsMain.vb</div>
<div class="ex" style="left:1579px;top:397px"></div><svg style="left:1600px;top:393px;color:#333" width="14" height="15"><use href="#frm"/></svg><div class="t l" style="left:1619px;top:391px">ClsNumTextBox.vb</div>
<div class="ex" style="left:1579px;top:417px"></div><svg style="left:1600px;top:413px;color:#333" width="14" height="15"><use href="#frm"/></svg><div class="t l" style="left:1619px;top:411px">ClsNumTextBox2.vb</div>
<div class="ex" style="left:1579px;top:437px"></div><svg style="left:1600px;top:433px" width="13" height="14"><use href="#vb"/></svg><div class="t" style="left:1619px;top:431px;height:14px;overflow:hidden">ClsSerial.vb</div>
<div class="r" style="left:1550px;top:445px;width:364px;height:6px;background:#d8d9e2"></div>

<!-- properties -->
<div class="r" style="left:1550px;top:451px;width:364px;height:24px;background:#007acc"></div>
<div class="t" style="left:1554px;top:453px;color:#fff">プロパティ</div>
<div class="gh" style="left:1622px;top:461px;width:227px;background:repeating-conic-gradient(#4fa4da 0 25%,transparent 0 50%) 0 0/2px 2px"></div>
<div class="tri" style="left:1859px;top:461px;border-top-color:#fff"></div>
<svg style="left:1876px;top:456px;color:#fff" width="10" height="14"><use href="#pin"/></svg>
<svg style="left:1896px;top:459px;color:#fff" width="10" height="10"><use href="#x"/></svg>
<div class="r" style="left:1550px;top:475px;width:363px;height:26px;background:#fff"></div>
<div class="tri" style="left:1904px;top:487px;border-left-width:3px;border-right-width:3px"></div>
<div class="r" style="left:1553px;top:503px;width:23px;height:22px;border:1px solid #3399ff;box-sizing:border-box"></div>
<svg style="left:1557px;top:506px" width="16" height="16" viewBox="0 0 16 16"><path d="M1 1h5v5H1zM1 9h5v5H1z" fill="none" stroke="#333" stroke-width="1.300"/><path d="M2 3.500h3M2 11.500h3M8 2h7M8 4h7M8 6h7M8 10h7M8 12h7M8 14h7" stroke="#333"/></svg>
<svg style="left:1580px;top:506px" width="16" height="16" viewBox="0 0 16 16"><path d="M1 1h6v6H1zM1 9h6L3 13h4v2H1l4-5H1z" fill="#444"/><path d="M12 2v11M9 10l3 4 3-4" fill="none" stroke="#333" stroke-width="1.600"/></svg>
<div class="sep" style="left:1602px;top:505px;height:20px"></div>
<div class="r" style="left:1605px;top:503px;width:23px;height:22px;border:1px solid #3399ff;box-sizing:border-box"></div>
<svg style="left:1609px;top:506px;color:#333" width="16" height="16"><use href="#fu"/></svg>
<svg style="left:1632px;top:506px" width="14" height="16" viewBox="0 0 14 16"><path d="M5 0h7L9 6h4L2 16l3-7H1z" fill="#333"/></svg>
<div class="sep" style="left:1654px;top:505px;height:20px"></div>
<svg style="left:1661px;top:507px;color:#bcbcbc" width="14" height="14"><use href="#wr"/></svg>

<div class="r" style="left:1550px;top:528px;width:346px;height:397px;background:#eeeef2;overflow:hidden">
<div class="row" style="left:15px;top:22px;width:161px"></div><div class="row" style="left:177px;top:22px;width:169px"></div>
<div class="row" style="left:15px;top:43px;width:161px"></div><div class="row" style="left:177px;top:43px;width:169px"></div>
<div class="row" style="left:15px;top:64px;width:161px"></div><div class="row" style="left:177px;top:64px;width:169px"></div>
<div class="row" style="left:15px;top:85px;width:161px"></div><div class="row" style="left:177px;top:85px;width:169px"></div>
<div class="row" style="left:15px;top:106px;width:161px"></div><div class="row" style="left:177px;top:106px;width:169px"></div>
<div class="row" style="left:15px;top:127px;width:161px"></div><div class="row" style="left:177px;top:127px;width:169px"></div>
<div class="row" style="left:15px;top:169px;width:161px"></div><div class="row" style="left:177px;top:169px;width:169px"></div>
<div class="row" style="left:15px;top:190px;width:161px"></div><div class="row" style="left:177px;top:190px;width:169px"></div>
<div class="row" style="left:15px;top:232px;width:161px"></div><div class="row" style="left:177px;top:232px;width:169px"></div>
<div class="row" style="left:15px;top:253px;width:161px"></div><div class="row" style="left:177px;top:253px;width:169px"></div>
<div class="row" style="left:15px;top:274px;width:161px"></div><div class="row" style="left:177px;top:274px;width:169px"></div>
<div class="row" style="left:15px;top:316px;width:161px"></div><div class="row" style="left:177px;top:316px;width:169px"></div>
<div class="row" style="left:15px;top:358px;width:161px"></div><div class="row" style="left:177px;top:358px;width:169px"></div>
<div class="row" style="left:15px;top:379px;width:161px"></div><div class="row" style="left:177px;top:379px;width:169px"></div>
</div>
<div class="bx" style="left:1553px;top:534px"></div><div class="t b" style="left:1569px;top:529px">その他</div>
<div class="t" style="left:1569px;top:550px">ActiveBackColor</div><div class="sw" style="left:1728px;top:551px;background:#ff0"></div><div class="t b" style="left:1756px;top:550px">Yellow</div>
<div class="t" style="left:1569px;top:571px">ActiveSelectAll</div><div class="t b" style="left:1730px;top:571px">True</div>
<div class="t" style="left:1569px;top:592px;width:156px;overflow:hidden;font-size:12.8px">AutoCompleteCustomSource</div>
<div class="t" style="left:1569px;top:613px">AutoCompleteMode</div><div class="t" style="left:1730px;top:613px">None</div>
<div class="t" style="left:1569px;top:634px">AutoCompleteSource</div><div class="t" style="left:1730px;top:634px">None</div>
<div class="t" style="left:1569px;top:655px">InactiveBackColor</div><div class="sw" style="left:1728px;top:656px;background:#fff"></div><div class="t b" style="left:1756px;top:655px">White</div>
<div class="bx" style="left:1553px;top:681px"></div><div class="t b" style="left:1569px;top:676px">データ</div>
<div class="bx" style="left:1553px;top:702px"></div><div class="r" style="left:1557px;top:704px;width:1px;height:7px;background:#1e1e1e"></div><div class="t" style="left:1569px;top:697px">(DataBindings)</div>
<div class="t" style="left:1569px;top:718px">Tag</div>
<div class="bx" style="left:1553px;top:744px"></div><div class="t b" style="left:1569px;top:739px">デザイン</div>
<div class="t" style="left:1569px;top:760px">GenerateMember</div><div class="t" style="left:1730px;top:760px">True</div>
<div class="t" style="left:1569px;top:781px">Locked</div><div class="t" style="left:1730px;top:781px">False</div>
<div class="t" style="left:1569px;top:802px">Modifiers</div><div class="t b" style="left:1730px;top:802px">Friend</div>
<div class="bx" style="left:1553px;top:828px"></div><div class="t b" style="left:1569px;top:823px">フォーカス</div>
<div class="t" style="left:1569px;top:844px">CausesValidation</div><div class="t" style="left:1730px;top:844px">True</div>
<div class="bx" style="left:1553px;top:870px"></div><div class="t b" style="left:1569px;top:865px">ユーザー補助</div>
<div class="t" style="left:1569px;top:886px">AccessibleDescription</div>
<div class="t" style="left:1569px;top:907px">AccessibleName</div>
<div class="r" style="left:1896px;top:528px;width:17px;height:397px;background:#e8e8ec"></div>
<div class="r" style="left:1900px;top:545px;width:9px;height:115px;background:#d0d1d7"></div>
<div class="up" style="left:1899px;top:535px"></div><div class="dn" style="left:1899px;top:914px"></div>
<div class="r" style="left:1550px;top:926px;width:364px;height:65px;background:#f5f5f5"></div>
<div class="t b" style="left:1556px;top:930px">Text</div>
<div class="t" style="left:1556px;top:952px">コントロールに関連付けられたテキストです。</div>

<!-- bottom -->
<div class="t" style="left:6px;top:996px;font-size:12px">エラー一覧</div>
<div class="r" style="left:6px;top:1018px;width:60px;height:6px;background:#cccedb"></div>
<div class="r" style="left:0;top:1024px;width:1920px;height:26px;background:#007acc"></div>
<div class="t" style="left:4px;top:1027px;color:#fff;font-size:12px">準備完了</div>

<!-- taskbar -->
<div class="r" style="left:0;top:1050px;width:1920px;height:8px;background:linear-gradient(90deg,#05317c,#0c3f8f 60%,#0a3a88);border-top:1px solid #0a2b60;box-sizing:border-box"></div>
<div class="tb" style="left:144px"></div><div class="tb" style="left:262px"></div><div class="tb" style="left:380px"></div>
<div class="tb" style="left:540px;background:linear-gradient(#d6def0,#8a9fc9)"></div>
<div class="tb" style="left:658px"></div><div class="tb" style="left:773px"></div><div class="tb" style="left:889px"></div>
<div class="tb" style="left:1300px"></div>
<div class="tb" style="left:1418px;background:linear-gradient(#e4e9f5,#b5c4e2)"></div>
<div class="r" style="left:1906px;top:1051px;width:14px;height:7px;background:linear-gradient(#8ea6cc,#5c7fb5);border:1px solid #a8bbd8;box-sizing:border-box"></div>
<div class="r" style="left:9px;top:1046px;width:36px;height:36px;border-radius:50%;background:radial-gradient(circle at 50% 50%,#e8603a 0 22%,#8fb0d8 60%,#cfdcec 100%);border:1px solid #5e7aa5;box-sizing:border-box"></div>
<div class="r" style="left:71px;top:1054px;width:14px;height:4px;background:#cc2222"></div>
<div class="r" style="left:113px;top:1054px;width:16px;height:4px;background:#fff"></div>
<div class="r" style="left:1567px;top:1054px;width:14px;height:4px;background:#d8402a;border:1px solid #fff;box-sizing:border-box"></div>
<div class="r" style="left:1595px;top:1053px;width:6px;height:5px;background:#f2f2f2"></div>
<div class="r" style="left:1610px;top:1053px;width:10px;height:5px;background:#cfd8ea"></div>
<div class="r" style="left:1628px;top:1054px;width:12px;height:4px;background:#e8c244"></div>
<div class="r" style="left:1650px;top:1053px;width:12px;height:5px;background:#eaeef5"></div>
<div class="r" style="left:1672px;top:1054px;width:8px;height:4px;background:#a8b4c8;border-radius:50%"></div>
<div class="r" style="left:1690px;top:1053px;width:10px;height:5px;background:#c8d0dc;border-radius:50%"></div>
<div class="t" style="left:1712px;top:1045px;color:#fff;font-size:8px;line-height:14px;height:13px;overflow:hidden">CAPS</div>
<div class="r" style="left:1739px;top:1052px;width:8px;height:6px;border:1px solid #fff;box-sizing:border-box"></div>
</body></html>
